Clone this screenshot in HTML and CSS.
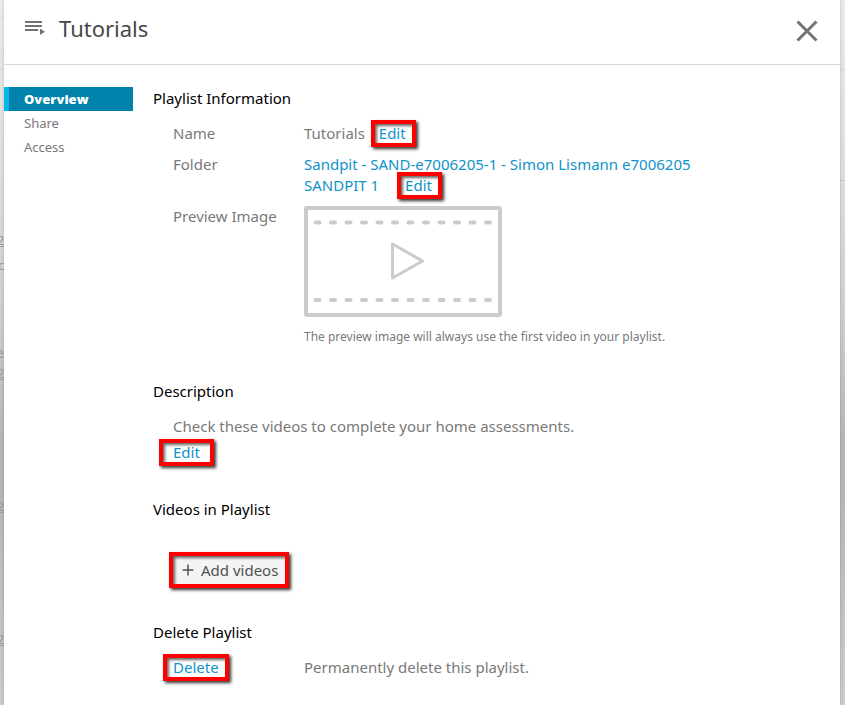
FILE: index.html
```html
<!DOCTYPE html>
<html lang="en">
<head>
<meta charset="utf-8">
<meta name="viewport" content="width=device-width, initial-scale=1">
<title>Tutorials</title>
<link rel="stylesheet" href="styles.css">
</head>
<body>
<div class="backdrop" aria-hidden="true">
  <ul class="behind">
    <li><span>2</span></li>
    <li><span class="owner">c</span><span class="title">fe</span><span>2</span></li>
    <li><span>2</span></li>
    <li><span>2</span></li>
  </ul>
</div>
<main class="dialog">
  <header class="dialog-head">
    <svg class="list-icon" width="20" height="14" viewBox="0 0 20 14" aria-hidden="true">
      <path d="M0 0h17v2H0zM0 4h17v2H0zM0 8h13v2H0zM15 7.500l5 3.250-5 3.250z"/>
    </svg>
    <h1>Tutorials</h1>
    <button class="close" type="button" aria-label="Close">
      <svg width="22" height="22" viewBox="0 0 22 22" aria-hidden="true"><path d="M1.500 1.500l19 19M20.500 1.500l-19 19"/></svg>
    </button>
  </header>
  <div class="dialog-body">
    <nav class="tabs">
      <a class="tab active" href="#overview">Overview</a>
      <a class="tab" href="#share">Share</a>
      <a class="tab" href="#access">Access</a>
    </nav>
    <div class="content" id="overview">
      <section class="info">
        <h2>Playlist Information</h2>
        <dl class="fields">
          <dt>Name</dt>
          <dd>Tutorials <a class="marked mark-name" href="#name">Edit</a></dd>
          <dt>Folder</dt>
          <dd><a href="#folder">Sandpit - SAND-e7006205-1 - Simon Lismann e7006205<br>SANDPIT 1</a> <a class="marked mark-folder" href="#edit-folder">Edit</a></dd>
          <dt>Preview Image</dt>
          <dd>
            <svg class="preview" width="198" height="111" viewBox="0 0 198 111" role="img" aria-label="Video placeholder">
              <rect x="2" y="2" width="194" height="107" rx="1"/>
              <path class="dashes" d="M11.500 16.500H188M11.500 94H188"/>
              <path class="play" d="M88.500 38v34l30-17z"/>
            </svg>
            <p class="hint">The preview image will always use the first video in your playlist.</p>
          </dd>
        </dl>
      </section>
      <section class="description">
        <h2>Description</h2>
        <p class="inset">Check these videos to complete your home assessments.</p>
        <p class="inset"><a class="marked mark-description" href="#description">Edit</a></p>
      </section>
      <section class="videos">
        <h2>Videos in Playlist</h2>
        <button class="add marked mark-add" type="button">
          <svg width="12" height="12" viewBox="0 0 12 12" aria-hidden="true"><path d="M6 0.500v11M0.500 6h11"/></svg>
          Add videos
        </button>
      </section>
      <section class="delete">
        <h2>Delete Playlist</h2>
        <div class="delete-row">
          <a class="marked mark-delete" href="#delete">Delete</a>
          <span>Permanently delete this playlist.</span>
        </div>
      </section>
    </div>
  </div>
</main>
</body>
</html>
```
FILE: styles.css
```css
* {
  box-sizing: border-box;
}

body {
  margin: 0;
  min-height: 100vh;
  padding: 0 5px 0 4px;
  display: flex;
  position: relative;
  overflow: hidden;
  font-family: "Noto Sans", "Open Sans", sans-serif;
  font-size: 15px;
  line-height: 21px;
  color: #797979;
}

a {
  color: #0f93c9;
  text-decoration: none;
}

h1, h2, p, dl, dd, ul {
  margin: 0;
  padding: 0;
}

.backdrop {
  position: absolute;
  inset: 0;
  background:
    linear-gradient(#d6d6d6, #d6d6d6) 0 69px / 100% 1px no-repeat,
    linear-gradient(#c6c6c6, #c6c6c6) 100% 180px / 5px 1px no-repeat,
    linear-gradient(#dcdcdc, #dcdcdc) 0 17px / 4px 1px no-repeat,
    linear-gradient(#dcdcdc, #dcdcdc) 0 48px / 4px 1px no-repeat,
    linear-gradient(#ebebeb 0, #dddddd 25%, #cecece 45%, #b5b5b5 63%, #b8b8b8 72%, #cccccc 100%);
}

.behind {
  list-style: none;
  width: 4px;
  padding-top: 114px;
  font-size: 12px;
  line-height: 10px;
  color: #9a9a9a;
}

.behind li {
  height: 133px;
  border-bottom: 1px solid #a0a0a0;
  display: flex;
  flex-direction: column;
  align-items: flex-end;
  justify-content: flex-end;
}

.behind .owner {
  margin-bottom: 76px;
}

.behind .title {
  margin-bottom: 12px;
  font-size: 15px;
}

.dialog {
  position: relative;
  flex: 1;
  min-width: 0;
  background: #fff;
  box-shadow: 0 0 3px rgba(0, 0, 0, 0.2);
}

.dialog-head {
  display: flex;
  align-items: center;
  height: 65px;
  padding: 0 22px 8px 21px;
  border-bottom: 1px solid #dadada;
}

.list-icon {
  fill: #737373;
}

h1 {
  margin-left: 14px;
  font-size: 22px;
  line-height: 30px;
  font-weight: 400;
  color: #484848;
}

.close {
  margin-left: auto;
  padding: 0;
  border: 0;
  background: none;
  display: flex;
  margin-top: 5px;
}

.close path {
  stroke: #737373;
  stroke-width: 3;
}

.dialog-body {
  display: flex;
  gap: 20px;
  padding-top: 22px;
}

.tabs {
  width: 129px;
  flex: none;
  font-size: 13px;
  line-height: 24px;
}

.tab {
  display: block;
  padding-left: 20px;
  color: #797979;
}

.tab.active {
  padding-left: 15px;
  border-left: 5px solid #00b9e8;
  background: #0082aa;
  color: #fff;
  font-family: "Open Sans", sans-serif;
  font-weight: 800;
}

.content {
  flex: 1;
  min-width: 0;
}

h2 {
  font-size: 15px;
  line-height: 22px;
  font-weight: 400;
  color: #000;
}

.fields {
  display: grid;
  grid-template-columns: 131px 1fr;
  row-gap: 10px;
  margin: 14px 0 0 20px;
}

.preview {
  display: block;
  fill: none;
  stroke: #cbcbcb;
  stroke-width: 4;
}

.dashes {
  stroke-dasharray: 4 11.500;
  stroke-linecap: round;
}

.play {
  stroke-linejoin: round;
  stroke-width: 3;
}

.hint {
  margin-top: 9px;
  font-size: 12px;
}

.description {
  margin-top: 33px;
}

.inset {
  margin-left: 20px;
  line-height: 26px;
}

.description h2 {
  margin-bottom: 11px;
}

.videos {
  margin-top: 33px;
}

.delete {
  margin-top: 37px;
}

.add {
  display: flex;
  align-items: center;
  gap: 7px;
  margin: 36px 0 0 20px;
  height: 28px;
  padding: 0 11px 0 9px;
  border: 0;
  background: #f4f4f4;
  font: inherit;
  color: #505050;
}

.add path {
  stroke: #505050;
  stroke-width: 1.5;
}

.delete-row {
  display: grid;
  grid-template-columns: 131px 1fr;
  justify-items: start;
  margin: 14px 0 0 20px;
}

.marked {
  position: relative;
}

.marked::after {
  content: "";
  position: absolute;
  inset: -3px -10px;
  border: 4px solid #f00;
  box-shadow: 2px 2px 3px rgba(0, 0, 0, 0.8), inset 2px 2px 3px rgba(0, 0, 0, 0.6);
}

.mark-name {
  margin-left: 10px;
}

.mark-folder {
  margin-left: 22px;
}

.mark-name::after,
.mark-folder::after {
  inset: -3px -10px -4px -8px;
}

.mark-description::after {
  inset: -3px -14px -4px -14px;
}

.mark-add::after {
  inset: -4px 0 -4px -4px;
}
```
